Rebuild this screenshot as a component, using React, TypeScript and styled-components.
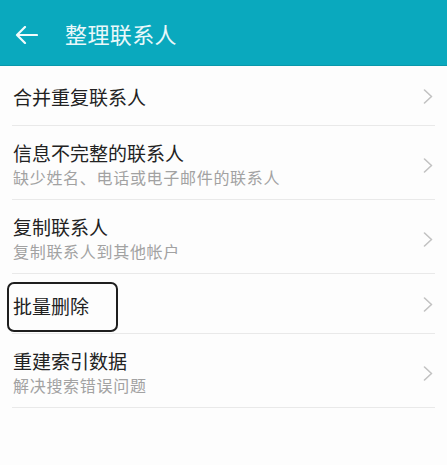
import React, { FunctionComponent } from 'react'
import styled, { createGlobalStyle } from 'styled-components'

const GlobalStyle = createGlobalStyle`
    html, body {
        margin: 0;
        padding: 0;
        background: #fdfdfd;
    }
    body {
        font-family: "Noto Sans CJK SC", "Noto Sans", sans-serif;
    }
`

const Screen = styled.div`
    display: flex;
    flex-direction: column;
    width: 447px;
    height: 465px;
    background: #fdfdfd;
    overflow: hidden;
`

const TopBar = styled.header`
    display: flex;
    align-items: center;
    height: 65px;
    padding: 0 0 0 15px;
    background: #0aa9be;
    border-bottom: 1px solid #0998ab;
    flex-shrink: 0;
`

const BackButton = styled.div`
    display: flex;
    align-items: center;
    width: 23px;
    height: 18px;
    margin: 4px 27px 0 0;
`

const Title = styled.h1`
    margin: 0;
    font-size: 22px;
    font-weight: 400;
    line-height: 30px;
    color: #eaf8fa;
    letter-spacing: 0.4px;
`

const List = styled.div`
    display: flex;
    flex-direction: column;
    margin: 0 12px;
`

const Row = styled.div<{ $twoLine?: boolean }>`
    display: flex;
    align-items: center;
    box-sizing: border-box;
    height: ${p => (p.$twoLine ? 74 : 60)}px;
    padding: ${p => (p.$twoLine ? '15px 2px 10px 1px' : '2px 2px 0 1px')};
    border-bottom: 1px solid #e9e9e9;
`

const Texts = styled.div`
    display: flex;
    flex-direction: column;
    flex: 1;
    min-width: 0;
`

const ItemTitle = styled.div`
    font-size: 19px;
    line-height: 24px;
    color: #222;
`

const ItemSub = styled.div`
    font-size: 16px;
    line-height: 24px;
    color: #a2a2a2;
    letter-spacing: 0.7px;
`

const Highlight = styled.div`
    display: flex;
    align-items: center;
    align-self: flex-start;
    box-sizing: border-box;
    height: 50px;
    margin: 4px 0 0 -6px;
    padding: 0 27px 2px 4px;
    border: 2px solid #1e1e1e;
    border-radius: 7px;
`

const Chevron = styled.svg`
    flex-shrink: 0;
    width: 10px;
    height: 15px;
`

const Arrow = () => (
    <svg width="23" height="18" viewBox="0 0 23 18" fill="none">
        <path
            d="M22 9H2M10 1L2 9l8 8"
            stroke="#f2fbfc"
            strokeWidth="2.2"
            strokeLinecap="round"
            strokeLinejoin="round"
        />
    </svg>
)

const More = () => (
    <Chevron viewBox="0 0 10 15" fill="none">
        <path
            d="M1.5 1l7 6.5-7 6.5"
            stroke="#c2c2c2"
            strokeWidth="1.6"
            strokeLinecap="round"
            strokeLinejoin="round"
        />
    </Chevron>
)

type Item = { title: string; sub?: string; boxed?: boolean }

const items: Item[] = [
    { title: '合并重复联系人' },
    { title: '信息不完整的联系人', sub: '缺少姓名、电话或电子邮件的联系人' },
    { title: '复制联系人', sub: '复制联系人到其他帐户' },
    { title: '批量删除', boxed: true },
    { title: '重建索引数据', sub: '解决搜索错误问题' },
]

const App: FunctionComponent = () => (
    <Screen>
        <GlobalStyle />
        <TopBar>
            <BackButton>
                <Arrow />
            </BackButton>
            <Title>整理联系人</Title>
        </TopBar>
        <List>
            {items.map(item => (
                <Row key={item.title} $twoLine={!!item.sub}>
                    <Texts>
                        {item.boxed ? (
                            <Highlight>
                                <ItemTitle>{item.title}</ItemTitle>
                            </Highlight>
                        ) : (
                            <ItemTitle>{item.title}</ItemTitle>
                        )}
                        {item.sub && <ItemSub>{item.sub}</ItemSub>}
                    </Texts>
                    <More />
                </Row>
            ))}
        </List>
    </Screen>
)

export default App
